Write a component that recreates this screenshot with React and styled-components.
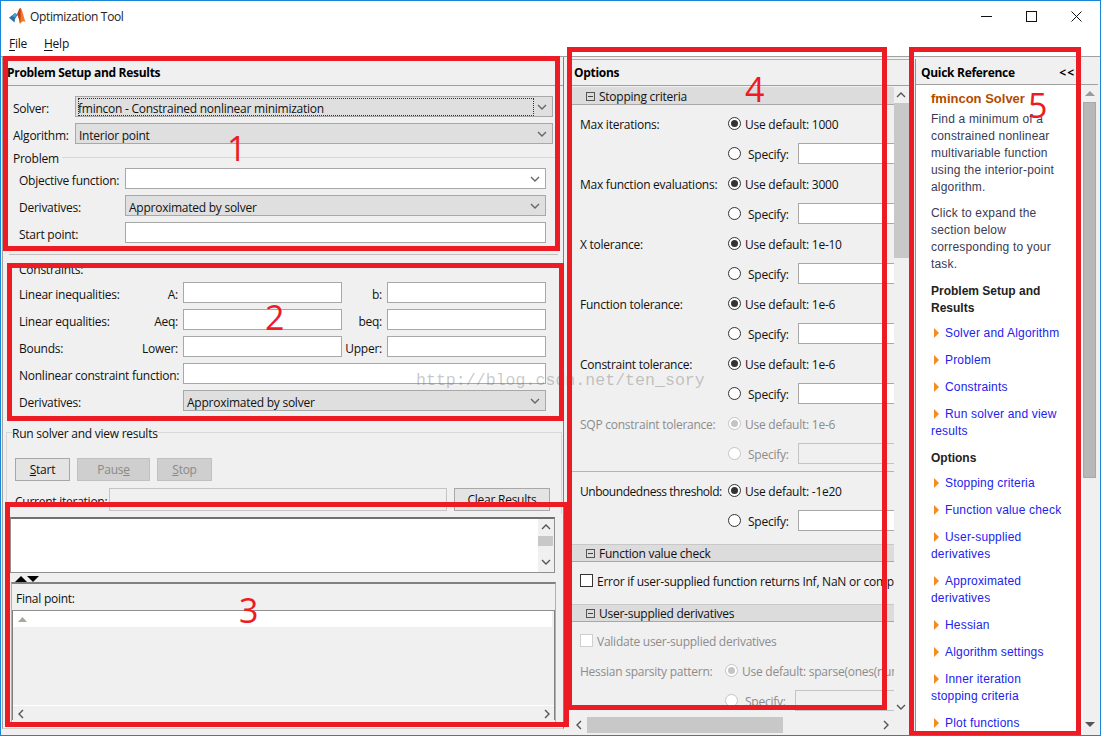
import React from 'react';
import styled, { createGlobalStyle } from 'styled-components';

const Global = createGlobalStyle`
  * { box-sizing: border-box; }
  html, body { margin: 0; padding: 0; background: #fff; }
  body { font-family: "Open Sans", "Noto Sans", sans-serif; font-size: 12px; color: #111; }
`;

const Window = styled.div`
  position: relative;
  width: 1101px;
  height: 736px;
  border: 1px solid #1a84d6;
  background: #fff;
  overflow: hidden;
  letter-spacing: -0.25px;
`;

const TitleBar = styled.div`
  height: 29px;
  display: flex;
  align-items: center;
  padding: 1px 0 0 8px;
`;

const TitleText = styled.span`
  margin-left: 3px;
  font-size: 12px;
  letter-spacing: -0.35px;
  color: #222;
`;

const WinControls = styled.div`
  margin-left: auto;
  display: flex;
  align-items: center;
  padding-right: 18px;
  gap: 34px;
`;

const MenuBar = styled.div`
  height: 26px;
  display: flex;
  align-items: center;
  gap: 17px;
  padding-left: 8px;
`;

const MenuItem = styled.span`
  u { text-underline-offset: 2px; }
`;

const Body = styled.div`
  height: 679px;
  display: flex;
  background: #f0f0f0;
  border-top: 1px solid #a0a0a0;
  padding-left: 1px;
`;

const LeftPanel = styled.div`
  width: 562px;
  height: 672px;
  border-left: 1px solid #a0a0a0;
  border-right: 1px solid #808080;
  border-bottom: 1px solid #d0d0d0;
  flex-shrink: 0;
`;

const PaneHeader = styled.div`
  height: ${p => p.$height || 29}px;
  display: flex;
  align-items: center;
  justify-content: space-between;
  padding: ${p => p.$nudge || 0}px ${p => p.$right || 0}px 0 ${p => p.$left || 4}px;
  border-bottom: 1px solid #a0a0a0;
  font-weight: 700;
  color: #000;
  letter-spacing: -0.3px;
`;

const Collapser = styled.span`
  letter-spacing: 1px;
`;

const Row = styled.div`
  display: flex;
  align-items: center;
  height: 21px;
  margin-top: ${p => p.$top ?? 6}px;
  margin-left: ${p => p.$indent || 0}px;
`;

const FieldLabel = styled.span`
  width: ${p => p.$width}px;
  flex-shrink: 0;
  white-space: nowrap;
  padding-top: 3px;
  text-align: ${p => (p.$end ? 'right' : 'left')};
  padding-right: ${p => (p.$end ? 5 : 0)}px;
`;

const Combo = styled.div`
  width: ${p => p.$width}px;
  height: 21px;
  display: flex;
  align-items: center;
  justify-content: space-between;
  padding: 0 5px 0 3px;
  border: 1px solid #a8a8a8;
  background: ${p => (p.$white ? '#fff' : '#dfdfdf')};
`;

const ComboText = styled.span`
  padding-top: 3px;
  line-height: 15px;
  white-space: nowrap;
  outline: ${p => (p.$focus ? '1px dotted #333' : 'none')};
  outline-offset: -1px;
  width: ${p => (p.$focus ? '456px' : 'auto')};
  margin-left: ${p => (p.$focus ? '-1px' : 0)};
`;

const TextBox = styled.div`
  width: ${p => p.$width}px;
  height: ${p => p.$height || 21}px;
  flex-shrink: 0;
  border: 1px solid ${p => (p.$faded ? '#c4c4c4' : '#a8a8a8')};
  background: ${p => (p.$faded ? '#f0f0f0' : '#fff')};
  margin-left: ${p => p.$left || 0}px;
`;

const GroupTitle = styled.div`
  display: flex;
  align-items: center;
  height: 16px;
  margin: 6px 8px 2px 10px;
  &::after {
    content: '';
    flex: 1;
    height: 1px;
    margin: 0 0 2px 3px;
    background: #d8d8d8;
  }
`;

const Separator = styled.div`
  height: 1px;
  margin: 11px 5px 0 6px;
  background: #c0c0c0;
`;

const PlainLabel = styled.div`
  height: 14px;
  line-height: 14px;
  margin: 8px 0 5px 16px;
`;

const RunGroup = styled.fieldset`
  margin: 13px 0 3px 3px;
  width: 556px;
  padding: 0 8px 4px;
  border: 1px solid #d8d8d8;
  border-bottom: 0;
  min-inline-size: 0;
`;

const RunLegend = styled.legend`
  padding: 2px 0 0;
  margin-left: -3px;
  height: 16px;
  line-height: 16px;
`;

const ButtonRow = styled.div`
  display: flex;
  gap: 7px;
  margin-top: 18px;
`;

const Button = styled.div`
  width: ${p => p.$width}px;
  height: ${p => p.$height || 23}px;
  display: flex;
  align-items: center;
  justify-content: center;
  flex-shrink: 0;
  border: 1px solid ${p => (p.$off ? '#c0c0c0' : '#a8a8a8')};
  background: ${p => (p.$off ? '#cfcfcf' : '#e4e4e4')};
  color: ${p => (p.$off ? '#8a8a8a' : '#111')};
  margin-left: ${p => p.$left || 0}px;
`;

const OutputBox = styled.div`
  width: 545px;
  height: 56px;
  margin-left: 7px;
  display: flex;
  justify-content: space-between;
  border: 1px solid #909090;
  border-top: 2px solid #707070;
  background: #fff;
`;

const VScroll = styled.div`
  width: ${p => p.$width}px;
  flex-shrink: 0;
  position: relative;
  background: #f0f0f0;
`;

const Thumb = styled.div`
  position: absolute;
  left: ${p => p.$left}px;
  top: ${p => p.$top}px;
  width: ${p => p.$width}px;
  height: ${p => p.$height}px;
  background: ${p => p.$bg || '#c8c8c8'};
  border: ${p => (p.$edge ? '1px solid #a8a8a8' : 'none')};
`;

const ArrowAt = styled.span`
  position: absolute;
  left: ${p => p.$left}px;
  top: ${p => p.$top}px;
  display: flex;
`;

const Splitter = styled.div`
  height: 9px;
  display: flex;
  align-items: center;
  padding: 2px 0 0 12px;
`;

const ResultPanel = styled.div`
  width: 545px;
  height: 144px;
  margin-left: 8px;
  border-top: 2px solid #808080;
  border-left: 1px solid #b0b0b0;
  border-right: 1px solid #b0b0b0;
`;

const FinalLabel = styled.div`
  height: 26px;
  line-height: 30px;
  padding-left: 4px;
`;

const ResultTable = styled.div`
  height: 110px;
  border: 1px solid #808080;
  border-top: 1px solid #909090;
  border-bottom: 0;
  display: flex;
  flex-direction: column;
`;

const TableRow = styled.div`
  height: 16px;
  margin-right: 2px;
  padding: 6px 0 0 5px;
  background: #fff;
  display: flex;
`;

const TableFill = styled.div`
  flex: 1;
  border-bottom: 1px solid #fff;
`;

const HScroll = styled.div`
  height: ${p => p.$height}px;
  position: relative;
  flex-shrink: 0;
  background: #f0f0f0;
`;

const MiddlePanel = styled.div`
  width: 341px;
  margin-left: 4px;
  height: 676px;
  flex-shrink: 0;
  display: flex;
  flex-direction: column;
`;

const MiddleHeader = styled(PaneHeader)`
  border-top: 1px solid #b0b0b0;
  margin-top: 2px;
  margin-left: 3px;
`;

const ScrollArea = styled.div`
  height: 630px;
  display: flex;
  padding-left: 4px;
  margin-top: 1px;
`;

const OptionsContent = styled.div`
  width: 322px;
  overflow: hidden;
  flex-shrink: 0;
`;

const SectionHead = styled.div`
  height: 18px;
  display: flex;
  align-items: center;
  padding: 1px 0 0 14px;
  background: #dcdcdc;
  border-bottom: 1px solid #a8a8a8;
  border-top: ${p => (p.$line ? '1px solid #c8c8c8' : '0')};
  margin-top: ${p => p.$top || 0}px;
  color: #111;
`;

const Collapse = styled.span`
  width: 9px;
  height: 9px;
  border: 1px solid #555;
  margin-right: 4px;
  display: flex;
  align-items: center;
  justify-content: center;
  &::after {
    content: '';
    width: 5px;
    height: 1px;
    background: #444;
  }
`;

const OptionRow = styled.div`
  height: 21px;
  margin-top: ${p => p.$top ?? 9}px;
  padding-left: ${p => p.$pad || 8}px;
  display: flex;
  align-items: center;
  white-space: nowrap;
  color: ${p => (p.$off ? '#8c8c8c' : '#111')};
`;

const OptionLabel = styled.span`
  width: ${p => p.$width || 148}px;
  flex-shrink: 0;
  padding-top: 2px;
  letter-spacing: ${p => (p.$tight ? '-0.45px' : 'inherit')};
`;

const OptionText = styled.span`
  padding-top: 2px;
`;

const Radio = styled.span`
  width: 13px;
  height: 13px;
  flex-shrink: 0;
  border-radius: 50%;
  border: 1px solid ${p => (p.$off ? '#c4c4c4' : '#333')};
  background: #fff;
  display: flex;
  align-items: center;
  justify-content: center;
  margin-right: ${p => p.$gap || 4}px;
  &::after {
    content: '';
    display: ${p => (p.$on ? 'block' : 'none')};
    width: 7px;
    height: 7px;
    border-radius: 50%;
    background: ${p => (p.$off ? '#c4c4c4' : '#333')};
  }
`;

const Check = styled.span`
  width: 13px;
  height: 13px;
  flex-shrink: 0;
  margin-right: 4px;
  background: #fff;
  border: 1px solid ${p => (p.$off ? '#cfcfcf' : '#333')};
`;

const SpecifyText = styled.span`
  width: 50px;
  flex-shrink: 0;
  padding-top: 2px;
`;

const Divider = styled.div`
  height: 1px;
  margin-top: 7px;
  background: #b4b4b4;
`;

const RightPanel = styled.div`
  margin-left: 6px;
  width: 183px;
  height: 678px;
  flex-shrink: 0;
  border-left: 1px solid #909090;
  display: flex;
  flex-direction: column;
  margin-top: 2px;
`;

const RightInner = styled.div`
  display: flex;
  height: 652px;
  overflow: hidden;
`;

const QuickBody = styled.div`
  width: 167px;
  flex-shrink: 0;
  background: #fff;
  padding: 5px 14px 0 15px;
  font-family: "Liberation Sans", Arial, sans-serif;
  font-size: 12px;
  line-height: 17px;
  letter-spacing: 0.18px;
  color: #3a3a55;
  overflow: hidden;
`;

const QuickTitle = styled.div`
  font-size: 13px;
  font-weight: 700;
  letter-spacing: 0;
  color: #b34a00;
  margin-bottom: 4px;
  white-space: nowrap;
`;

const Para = styled.p`
  margin: 0 0 ${p => p.$gap ?? 10}px;
`;

const QuickHeading = styled.div`
  font-weight: 700;
  letter-spacing: 0;
  color: #222;
  margin-bottom: ${p => p.$gap ?? 8}px;
`;

const QuickLink = styled.div`
  color: #2222ee;
  margin-bottom: 10px;
  &::before {
    content: '';
    display: inline-block;
    border-left: 5px solid #f58a1f;
    border-top: 5px solid transparent;
    border-bottom: 5px solid transparent;
    margin: 0 6px 0 3px;
    vertical-align: -1px;
  }
`;

const Box = styled.div`
  position: absolute;
  left: ${p => p.$x}px;
  top: ${p => p.$y}px;
  width: ${p => p.$w}px;
  height: ${p => p.$h}px;
  border: 5px solid #ed1c24;
  pointer-events: none;
`;

const Mark = styled.span`
  position: absolute;
  left: ${p => p.$x}px;
  top: ${p => p.$y}px;
  font-family: "Open Sans", sans-serif;
  font-size: 34px;
  line-height: 34px;
  letter-spacing: 0;
  color: #ed1c24;
`;

const Watermark = styled.span`
  position: absolute;
  left: 415px;
  top: 370px;
  font-family: "Liberation Mono", monospace;
  font-size: 16.6px;
  letter-spacing: 0;
  color: rgba(110, 110, 110, 0.38);
`;

const Logo = () => (
  <svg width="18" height="18" viewBox="0 0 18 18">
    <path d="M0 10.7 L6 6 L8.5 8 L6 12 L5.5 15.6 Z" fill="#2f6fa8" />
    <path d="M3 9 L6 6 L8 7.5 L6 10.5 Z" fill="#4aa3c8" />
    <path d="M8 7 C9.5 5 10 1 11.5 1 C13 1 14.5 10 16.5 15 C14.5 13.5 13 14 11 17 C10.5 13 9.5 10 8 7 Z" fill="#ee7a28" />
    <path d="M11.5 1 C10 1 9.5 5 8 7 C9.5 10 10.5 13 11 17 C11.5 12 12 6 11.5 1 Z" fill="#c63a1c" />
  </svg>
);

const Chevron = ({ dir = 'down', color = '#555', size = 10 }) => {
  const pts = {
    down: '1,3 5,7 9,3',
    up: '1,7 5,3 9,7',
    left: '7,1 3,5 7,9',
    right: '3,1 7,5 3,9',
  }[dir];
  return (
    <svg width={size} height={size} viewBox="0 0 10 10">
      <polyline points={pts} fill="none" stroke={color} strokeWidth="1.4" />
    </svg>
  );
};

const Tri = ({ up, w = 11, h = 6, color = '#000' }) => (
  <svg width={w} height={h} viewBox={`0 0 ${w} ${h}`}>
    <polygon points={up ? `0,${h} ${w / 2},0 ${w},${h}` : `0,0 ${w},0 ${w / 2},${h}`} fill={color} />
  </svg>
);

const Under = ({ first, rest }) => (
  <span>
    <u>{first}</u>
    {rest}
  </span>
);

const ComboField = ({ width, text, white, focus }) => (
  <Combo $width={width} $white={white}>
    <ComboText $focus={focus}>{text}</ComboText>
    <Chevron color="#666" />
  </Combo>
);

const Option = ({ label, value, off, first, tight }) => (
  <>
    <OptionRow $off={off} $top={first ? 8 : 9}>
      <OptionLabel $tight={tight}>{label}</OptionLabel>
      <Radio $on $off={off} />
      <OptionText>Use default: {value}</OptionText>
    </OptionRow>
    <OptionRow $off={off}>
      <OptionLabel />
      <Radio $off={off} $gap={7} />
      <SpecifyText>Specify:</SpecifyText>
      <TextBox $width={120} $faded={off} />
    </OptionRow>
  </>
);

const links1 = ['Solver and Algorithm', 'Problem', 'Constraints', 'Run solver and view results'];
const links2 = [
  'Stopping criteria',
  'Function value check',
  'User-supplied derivatives',
  'Approximated derivatives',
  'Hessian',
  'Algorithm settings',
  'Inner iteration stopping criteria',
  'Plot functions',
];

const App = () => (
  <>
    <Global />
    <Window>
      <TitleBar>
        <Logo />
        <TitleText>Optimization Tool</TitleText>
        <WinControls>
          <svg width="11" height="11" viewBox="0 0 11 11"><line x1="0" y1="5.5" x2="11" y2="5.5" stroke="#111" /></svg>
          <svg width="11" height="11" viewBox="0 0 11 11"><rect x="0.5" y="0.5" width="10" height="10" fill="none" stroke="#111" /></svg>
          <svg width="11" height="11" viewBox="0 0 11 11"><path d="M0.5 0.5 L10.5 10.5 M10.5 0.5 L0.5 10.5" stroke="#111" /></svg>
        </WinControls>
      </TitleBar>
      <MenuBar>
        <MenuItem><Under first="F" rest="ile" /></MenuItem>
        <MenuItem><Under first="H" rest="elp" /></MenuItem>
      </MenuBar>
      <Body>
        <LeftPanel>
          <PaneHeader $nudge={2}>Problem Setup and Results</PaneHeader>
          <Row $top={10} $indent={10}>
            <FieldLabel $width={62}>Solver:</FieldLabel>
            <ComboField width={478} text="fmincon - Constrained nonlinear minimization" focus />
          </Row>
          <Row $indent={10}>
            <FieldLabel $width={62}>Algorithm:</FieldLabel>
            <ComboField width={478} text="Interior point" />
          </Row>
          <GroupTitle>Problem</GroupTitle>
          <Row $top={0} $indent={16}>
            <FieldLabel $width={106}>Objective function:</FieldLabel>
            <ComboField width={421} white />
          </Row>
          <Row $indent={16}>
            <FieldLabel $width={106}>Derivatives:</FieldLabel>
            <ComboField width={421} text="Approximated by solver" />
          </Row>
          <Row $indent={16}>
            <FieldLabel $width={106}>Start point:</FieldLabel>
            <TextBox $width={421} />
          </Row>
          <Separator />
          <PlainLabel>Constraints:</PlainLabel>
          <Row $top={0} $indent={16}>
            <FieldLabel $width={120}>Linear inequalities:</FieldLabel>
            <FieldLabel $width={44} $end>A:</FieldLabel>
            <TextBox $width={159} />
            <FieldLabel $width={45} $end>b:</FieldLabel>
            <TextBox $width={159} />
          </Row>
          <Row $indent={16}>
            <FieldLabel $width={120}>Linear equalities:</FieldLabel>
            <FieldLabel $width={44} $end>Aeq:</FieldLabel>
            <TextBox $width={159} />
            <FieldLabel $width={45} $end>beq:</FieldLabel>
            <TextBox $width={159} />
          </Row>
          <Row $indent={16}>
            <FieldLabel $width={120}>Bounds:</FieldLabel>
            <FieldLabel $width={44} $end>Lower:</FieldLabel>
            <TextBox $width={159} />
            <FieldLabel $width={45} $end>Upper:</FieldLabel>
            <TextBox $width={159} />
          </Row>
          <Row $indent={16}>
            <FieldLabel $width={164}>Nonlinear constraint function:</FieldLabel>
            <TextBox $width={363} />
          </Row>
          <Row $indent={16}>
            <FieldLabel $width={164}>Derivatives:</FieldLabel>
            <ComboField width={363} text="Approximated by solver" />
          </Row>
          <RunGroup>
            <RunLegend>Run solver and view results</RunLegend>
            <ButtonRow>
              <Button $width={55}><Under first="S" rest="tart" /></Button>
              <Button $width={73} $off>Paus<u>e</u></Button>
              <Button $width={55} $off><Under first="S" rest="top" /></Button>
            </ButtonRow>
            <Row $top={8}>
              <FieldLabel $width={94}>Current iteration:</FieldLabel>
              <TextBox $width={338} $height={23} $faded />
              <Button $width={96} $left={7}>Clear Results</Button>
            </Row>
          </RunGroup>
          <OutputBox>
            <span />
            <VScroll $width={16}>
              <ArrowAt $left={3} $top={3}><Chevron dir="up" /></ArrowAt>
              <Thumb $left={0} $top={17} $width={15} $height={10} />
              <ArrowAt $left={3} $top={38}><Chevron /></ArrowAt>
            </VScroll>
          </OutputBox>
          <Splitter>
            <Tri up w={12} h={6} />
            <Tri w={12} h={6} />
          </Splitter>
          <ResultPanel>
            <FinalLabel>Final point:</FinalLabel>
            <ResultTable>
              <TableRow>
                <Tri up w={9} h={5} color="#a8a89c" />
              </TableRow>
              <TableFill />
              <HScroll $height={14}>
                <ArrowAt $left={3} $top={3}><Chevron dir="left" /></ArrowAt>
                <ArrowAt $left={529} $top={3}><Chevron dir="right" /></ArrowAt>
              </HScroll>
            </ResultTable>
          </ResultPanel>
        </LeftPanel>
        <MiddlePanel>
          <MiddleHeader $left={3} $height={27}>Options</MiddleHeader>
          <ScrollArea>
            <OptionsContent>
              <SectionHead><Collapse />Stopping criteria</SectionHead>
              <Option first label="Max iterations:" value="1000" />
              <Option label="Max function evaluations:" value="3000" />
              <Option label="X tolerance:" value="1e-10" />
              <Option label="Function tolerance:" value="1e-6" />
              <Option label="Constraint tolerance:" value="1e-6" />
              <Option off label="SQP constraint tolerance:" value="1e-6" />
              <Divider />
              <Option first tight label="Unboundedness threshold:" value="-1e20" />
              <SectionHead $top={13} $line><Collapse />Function value check</SectionHead>
              <OptionRow $top={8}>
                <Check />
                <OptionText>Error if user-supplied function returns Inf, NaN or complex</OptionText>
              </OptionRow>
              <SectionHead $top={13} $line><Collapse />User-supplied derivatives</SectionHead>
              <OptionRow $top={8} $off>
                <Check $off />
                <OptionText>Validate user-supplied derivatives</OptionText>
              </OptionRow>
              <OptionRow $off>
                <OptionLabel $width={145}>Hessian sparsity pattern:</OptionLabel>
                <Radio $on $off />
                <OptionText>Use default: sparse(ones(numberOfVariables))</OptionText>
              </OptionRow>
              <OptionRow $off>
                <OptionLabel $width={145} />
                <Radio $off $gap={7} />
                <SpecifyText>Specify:</SpecifyText>
                <TextBox $width={120} $faded />
              </OptionRow>
            </OptionsContent>
            <VScroll $width={15}>
              <ArrowAt $left={2} $top={3}><Chevron dir="up" /></ArrowAt>
              <Thumb $left={0} $top={16} $width={15} $height={155} />
              <ArrowAt $left={2} $top={615}><Chevron /></ArrowAt>
            </VScroll>
          </ScrollArea>
          <HScroll $height={16}>
            <ArrowAt $left={6} $top={3}><Chevron dir="left" /></ArrowAt>
            <Thumb $left={19} $top={0} $width={196} $height={16} />
            <ArrowAt $left={313} $top={3}><Chevron dir="right" /></ArrowAt>
          </HScroll>
        </MiddlePanel>
        <RightPanel>
          <PaneHeader $left={5} $right={23} $height={26} $nudge={2}>
            <span>Quick Reference</span>
            <Collapser>{'<<'}</Collapser>
          </PaneHeader>
          <RightInner>
            <QuickBody>
              <QuickTitle>fmincon Solver</QuickTitle>
              <Para $gap={9}>Find a minimum of a constrained nonlinear multivariable function using the interior-point algorithm.</Para>
              <Para>Click to expand the section below corresponding to your task.</Para>
              <QuickHeading>Problem Setup and Results</QuickHeading>
              {links1.map(l => <QuickLink key={l}>{l}</QuickLink>)}
              <QuickHeading>Options</QuickHeading>
              {links2.map(l => <QuickLink key={l}>{l}</QuickLink>)}
            </QuickBody>
            <VScroll $width={15}>
              <ArrowAt $left={2} $top={6}><Tri up w={10} h={5} color="#9a9a9a" /></ArrowAt>
              <Thumb $left={0} $top={17} $width={13} $height={376} $bg="#b8b8b8" $edge />
              <ArrowAt $left={2} $top={637}><Tri w={10} h={5} color="#555" /></ArrowAt>
            </VScroll>
          </RightInner>
        </RightPanel>
      </Body>
      <Watermark>http://blog.csdn.net/ten_sory</Watermark>
      <Box $x={2} $y={55} $w={557} $h={195} />
      <Box $x={6} $y={262} $w={557} $h={158} />
      <Box $x={4} $y={501} $w={564} $h={225} />
      <Box $x={566} $y={46} $w={320} $h={663} />
      <Box $x={908} $y={46} $w={172} $h={689} />
      <Mark $x={226} $y={130}>1</Mark>
      <Mark $x={264} $y={299}>2</Mark>
      <Mark $x={238} $y={592}>3</Mark>
      <Mark $x={744} $y={71}>4</Mark>
      <Mark $x={1027} $y={87}>5</Mark>
    </Window>
  </>
);

export default App;
